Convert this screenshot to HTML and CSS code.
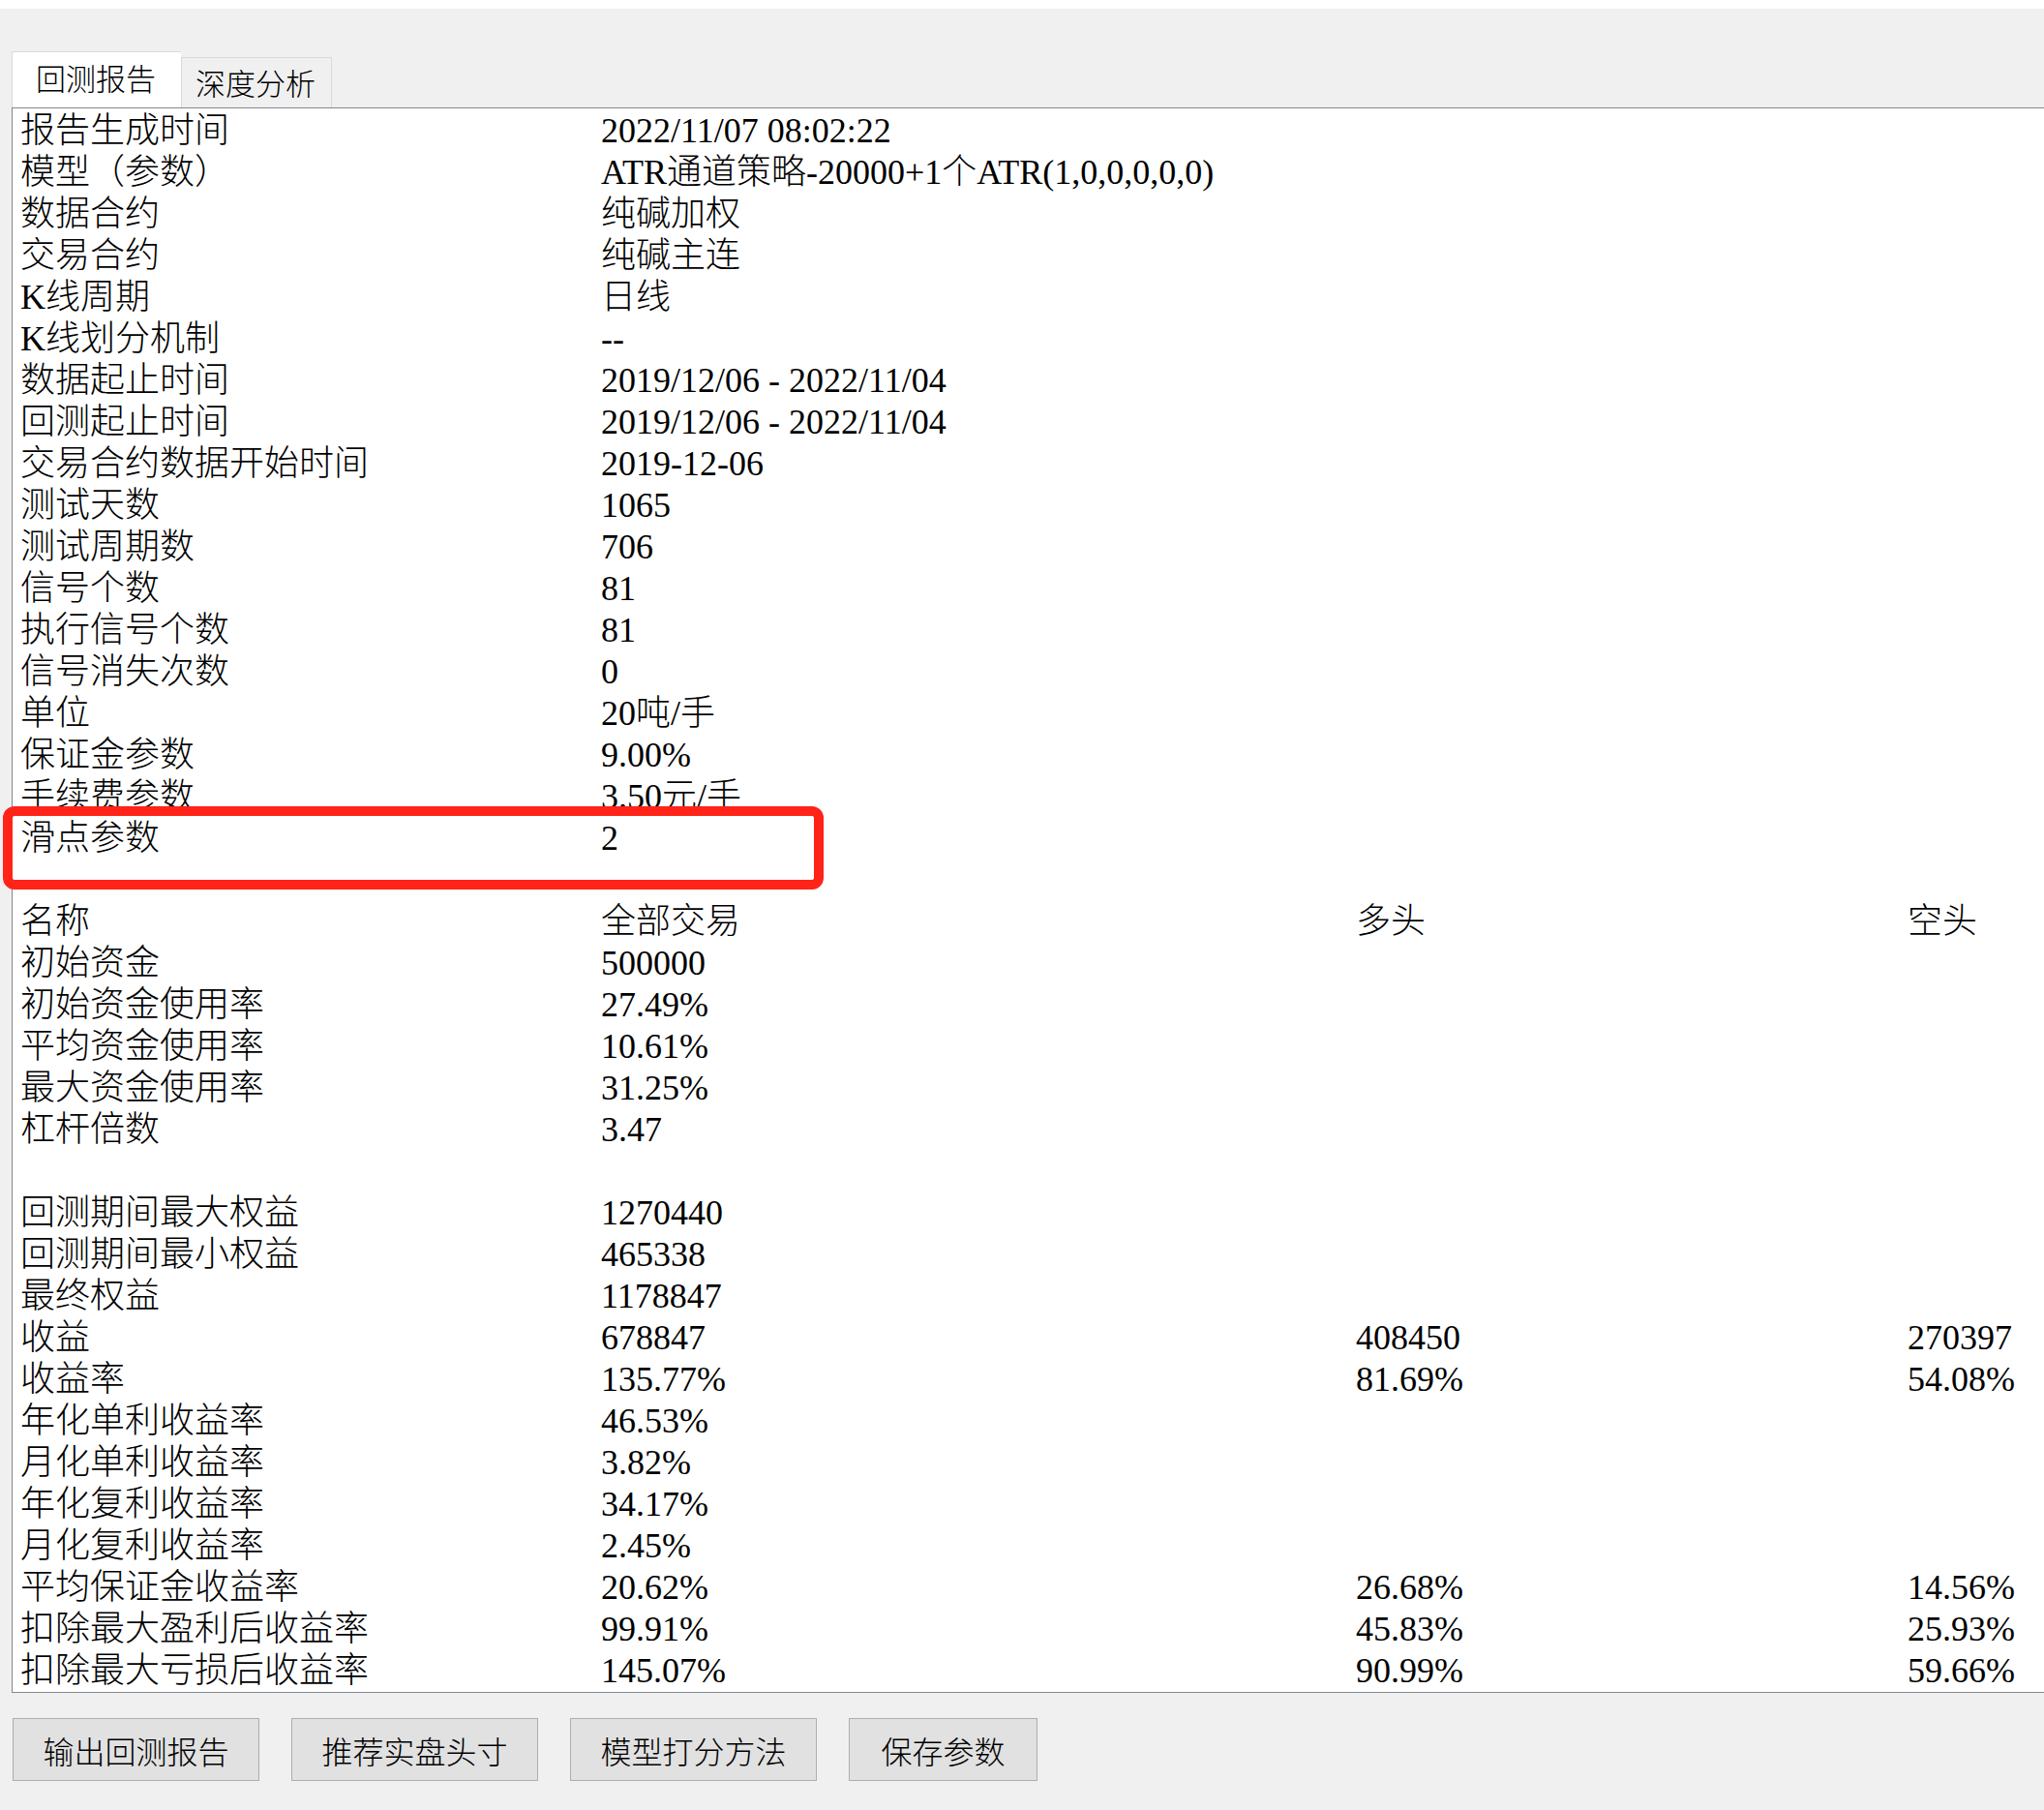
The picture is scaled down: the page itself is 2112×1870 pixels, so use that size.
FILE: index.html
```html
<!DOCTYPE html>
<html lang="zh-CN">
<head>
  <meta charset="UTF-8" />
  <title>回测报告</title>
  <link rel="stylesheet" href="styles.css">
</head>
<body>
<div class="window">
  <div class="tabs">
    <div class="tab active">回测报告</div>
    <div class="tab">深度分析</div>
  </div>
  <div class="panel">
    <div class="row"><span>报告生成时间</span><span>2022/11/07 08:02:22</span></div>
    <div class="row"><span>模型（参数）</span><span>ATR通道策略-20000+1个ATR(1,0,0,0,0,0)</span></div>
    <div class="row"><span>数据合约</span><span>纯碱加权</span></div>
    <div class="row"><span>交易合约</span><span>纯碱主连</span></div>
    <div class="row"><span>K线周期</span><span>日线</span></div>
    <div class="row"><span>K线划分机制</span><span>--</span></div>
    <div class="row"><span>数据起止时间</span><span>2019/12/06 - 2022/11/04</span></div>
    <div class="row"><span>回测起止时间</span><span>2019/12/06 - 2022/11/04</span></div>
    <div class="row"><span>交易合约数据开始时间</span><span>2019-12-06</span></div>
    <div class="row"><span>测试天数</span><span>1065</span></div>
    <div class="row"><span>测试周期数</span><span>706</span></div>
    <div class="row"><span>信号个数</span><span>81</span></div>
    <div class="row"><span>执行信号个数</span><span>81</span></div>
    <div class="row"><span>信号消失次数</span><span>0</span></div>
    <div class="row"><span>单位</span><span>20吨/手</span></div>
    <div class="row"><span>保证金参数</span><span>9.00%</span></div>
    <div class="row"><span>手续费参数</span><span>3.50元/手</span></div>
    <div class="row"><span>滑点参数</span><span>2</span></div>
    <div class="row blank"></div>
    <div class="row"><span>名称</span><span>全部交易</span><span>多头</span><span>空头</span></div>
    <div class="row"><span>初始资金</span><span>500000</span></div>
    <div class="row"><span>初始资金使用率</span><span>27.49%</span></div>
    <div class="row"><span>平均资金使用率</span><span>10.61%</span></div>
    <div class="row"><span>最大资金使用率</span><span>31.25%</span></div>
    <div class="row"><span>杠杆倍数</span><span>3.47</span></div>
    <div class="row blank"></div>
    <div class="row"><span>回测期间最大权益</span><span>1270440</span></div>
    <div class="row"><span>回测期间最小权益</span><span>465338</span></div>
    <div class="row"><span>最终权益</span><span>1178847</span></div>
    <div class="row"><span>收益</span><span>678847</span><span>408450</span><span>270397</span></div>
    <div class="row"><span>收益率</span><span>135.77%</span><span>81.69%</span><span>54.08%</span></div>
    <div class="row"><span>年化单利收益率</span><span>46.53%</span></div>
    <div class="row"><span>月化单利收益率</span><span>3.82%</span></div>
    <div class="row"><span>年化复利收益率</span><span>34.17%</span></div>
    <div class="row"><span>月化复利收益率</span><span>2.45%</span></div>
    <div class="row"><span>平均保证金收益率</span><span>20.62%</span><span>26.68%</span><span>14.56%</span></div>
    <div class="row"><span>扣除最大盈利后收益率</span><span>99.91%</span><span>45.83%</span><span>25.93%</span></div>
    <div class="row"><span>扣除最大亏损后收益率</span><span>145.07%</span><span>90.99%</span><span>59.66%</span></div>
  </div>
  <div class="actions">
    <button>输出回测报告</button>
    <button>推荐实盘头寸</button>
    <button>模型打分方法</button>
    <button class="short">保存参数</button>
  </div>
  <!-- highlight around slippage row -->
  <div class="mark"></div>
</div>
</body>
</html>
```

FILE: styles.css
```css
html, body {
  margin: 0;
  overflow: hidden;
}
body {
  background: #f0f0f0;
  border-top: 9px solid #ffffff;
  font-family: "Liberation Serif", "Noto Sans CJK SC", serif;
  font-weight: 300;
  color: #000;
  min-height: 1870px;
}
.window {
  position: relative;
}
.tabs {
  display: flex;
  align-items: flex-end;
  padding-left: 12px;
  padding-top: 44px;
  height: 58px;
}
.tab {
  box-sizing: border-box;
  height: 52px;
  width: 156px;
  border: 1px solid #d9d9d9;
  border-bottom: none;
  background: #f0f0f0;
  font-size: 31px;
  line-height: 56px;
  padding-left: 14px;
}
.tab.active {
  height: 58px;
  width: 175px;
  background: #ffffff;
  line-height: 58px;
  padding-left: 24px;
  border-right: none;
}
.panel {
  margin-left: 12px;
  width: calc(100% + 40px);
  height: 1634px;
  overflow: hidden;
  background: #ffffff;
  border: 1px solid #828790;
  padding-top: 2px;
  box-sizing: content-box;
}
.row {
  display: grid;
  grid-template-columns: 600px 780px 570px 1fr;
  padding-left: 8px;
  height: 43px;
  line-height: 43px;
  font-size: 36px;
  white-space: nowrap;
}
.actions {
  display: flex;
  gap: 33px;
  margin: 26px 0 0 13px;
}
button {
  font-family: "Liberation Serif", "Noto Sans CJK SC", serif;
  font-weight: 300;
  font-size: 32px;
  width: 255px;
  height: 65px;
  background: #e1e1e1;
  border: 1px solid #adadad;
  color: #000;
  padding: 0;
}
button.short {
  width: 195px;
}
.mark {
  position: absolute;
  left: 3px;
  top: 824px;
  width: 848px;
  height: 86px;
  box-sizing: border-box;
  border: 10px solid #ff2318;
  border-radius: 12px;
}
```
